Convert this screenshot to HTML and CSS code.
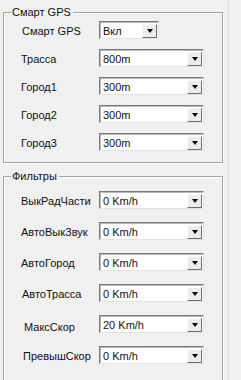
FILE: index.html
```html
<!DOCTYPE html>
<html lang="ru">
<head>
    <meta charset="UTF-8">
    <meta name="viewport" content="width=device-width, initial-scale=1.0">
    <title>Смарт GPS</title>
    <link rel="stylesheet" href="styles.css">
</head>
<body>
    <div class="panel">
        <!-- Smart GPS group -->
        <fieldset class="group group-gps">
            <legend>Смарт GPS</legend>

            <div class="row">
                <label class="row-label label-nudge">Смарт GPS</label>
                <div class="combo combo-short">
                    <span class="combo-value">Вкл</span>
                    <span class="combo-btn"><span class="arrow"></span></span>
                </div>
            </div>

            <div class="row">
                <label class="row-label">Трасса</label>
                <div class="combo">
                    <span class="combo-value">800m</span>
                    <span class="combo-btn"><span class="arrow"></span></span>
                </div>
            </div>

            <div class="row">
                <label class="row-label">Город1</label>
                <div class="combo">
                    <span class="combo-value">300m</span>
                    <span class="combo-btn"><span class="arrow"></span></span>
                </div>
            </div>

            <div class="row">
                <label class="row-label">Город2</label>
                <div class="combo">
                    <span class="combo-value">300m</span>
                    <span class="combo-btn"><span class="arrow"></span></span>
                </div>
            </div>

            <div class="row">
                <label class="row-label">Город3</label>
                <div class="combo">
                    <span class="combo-value">300m</span>
                    <span class="combo-btn"><span class="arrow"></span></span>
                </div>
            </div>
        </fieldset>

        <!-- Filters group -->
        <fieldset class="group group-filters">
            <legend>Фильтры</legend>

            <div class="row">
                <label class="row-label">ВыкРадЧасти</label>
                <div class="combo">
                    <span class="combo-value">0 Km/h</span>
                    <span class="combo-btn"><span class="arrow"></span></span>
                </div>
            </div>

            <div class="row">
                <label class="row-label">АвтоВыкЗвук</label>
                <div class="combo">
                    <span class="combo-value">0 Km/h</span>
                    <span class="combo-btn"><span class="arrow"></span></span>
                </div>
            </div>

            <div class="row">
                <label class="row-label">АвтоГород</label>
                <div class="combo">
                    <span class="combo-value">0 Km/h</span>
                    <span class="combo-btn"><span class="arrow"></span></span>
                </div>
            </div>

            <div class="row">
                <label class="row-label label-nudge">АвтоТрасса</label>
                <div class="combo">
                    <span class="combo-value">0 Km/h</span>
                    <span class="combo-btn"><span class="arrow"></span></span>
                </div>
            </div>

            <div class="row">
                <label class="row-label label-max">МаксСкор</label>
                <div class="combo">
                    <span class="combo-value">20 Km/h</span>
                    <span class="combo-btn"><span class="arrow"></span></span>
                </div>
            </div>

            <div class="row row-last">
                <label class="row-label label-over">ПревышСкор</label>
                <div class="combo">
                    <span class="combo-value">0 Km/h</span>
                    <span class="combo-btn"><span class="arrow"></span></span>
                </div>
            </div>
        </fieldset>
    </div>
</body>
</html>
```

FILE: styles.css
```css
/* Windows-style settings panel */
body {
    margin: 0;
    padding: 0;
    background-color: #f0f0f0;
    font-family: "Liberation Sans", Arial, sans-serif;
    font-size: 11px;
    color: #111;
    overflow: hidden;
}

.panel {
    width: 228px;
    height: 380px;
    border-right: 1px solid #dcdcdc;
    overflow: hidden;
}

/* group boxes */
.group {
    margin: 0 0 0 3px;
    width: 220px;
    box-sizing: border-box;
    border: 1px solid #a3a3a3;
    box-shadow: inset 1px 1px 0 #fff, 1px 1px 0 #fff;
    padding: 2px 0 11px 17px;
    min-inline-size: 0;
}

.group legend {
    margin-left: -10px;
    padding: 0 2px 0 1px;
    line-height: 13px;
}

.group-gps {
    margin-top: 6px;
}

.group-filters {
    margin-top: 7px;
    padding-top: 8px;
    padding-bottom: 40px;
}

/* rows */
.row {
    display: flex;
    align-items: center;
    height: 18px;
    margin-bottom: 10px;
}

.row:last-child {
    margin-bottom: 0;
}

.group-filters .row {
    margin-bottom: 13px;
}

.group-filters .row-last {
    margin-top: 3px;
}

.row-label {
    width: 78px;
    flex-shrink: 0;
    box-sizing: border-box;
    padding-top: 1px;
}

.label-nudge {
    padding-left: 1px;
}

.label-max {
    padding-left: 3px;
    padding-top: 6px;
}

.label-over {
    padding-left: 2px;
}

/* combo boxes */
.combo {
    display: flex;
    align-items: center;
    width: 105px;
    height: 18px;
    box-sizing: border-box;
    background-color: #fff;
    border: 1px solid;
    border-color: #7a7a7a #e3e3e3 #e3e3e3 #7a7a7a;
    box-shadow: inset 1px 1px 0 #b9b9b9;
}

.combo-short {
    width: 60px;
}

.combo-value {
    flex: 1;
    padding-left: 3px;
    padding-top: 1px;
    white-space: nowrap;
}

.combo-btn {
    display: flex;
    align-items: center;
    justify-content: center;
    width: 15px;
    height: 14px;
    margin: 1px 1px 0 0;
    box-sizing: border-box;
    background-color: #ececec;
    border: 1px solid;
    border-color: #fcfcfc #6e6e6e #6e6e6e #fcfcfc;
}

.arrow {
    width: 0;
    height: 0;
    border-left: 3.5px solid transparent;
    border-right: 3.5px solid transparent;
    border-top: 4px solid #000;
    margin-top: 1px;
}
```
